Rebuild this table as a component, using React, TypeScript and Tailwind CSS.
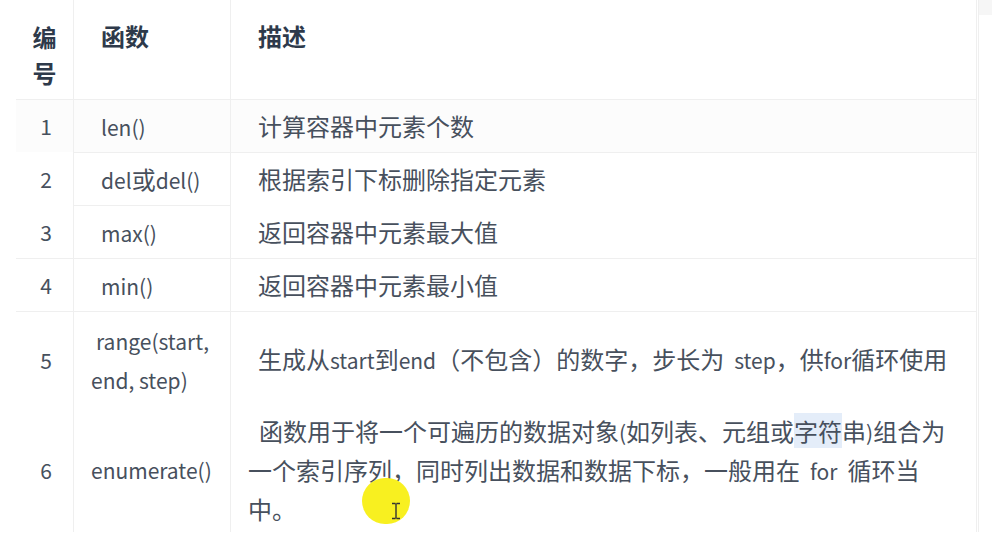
import React from "react";

const font = { fontFamily: '"Noto Sans CJK SC", "Noto Sans", sans-serif' };

function T({ s }: { s: string }) {
  const parts = s.split(/( |[\x21-\x7F]+)/).filter((p) => p !== "");
  return (
    <>
      {parts.map((p, i) =>
        p === " " ? (
          <span key={i} className="inline-block w-[10px]" />
        ) : /^[\x00-\x7F]+$/.test(p) ? (
          <span key={i} className="text-[21px]">
            {p}
          </span>
        ) : (
          <span key={i}>{p}</span>
        )
      )}
    </>
  );
}

type Row = {
  n: string;
  fn: React.ReactNode;
  desc: React.ReactNode;
  h: string;
  top: string;
  bg?: string;
  fnPad: string;
  descPad: string;
};

export default function App() {
  const rows: Row[] = [
    {
      n: "1",
      fn: <T s="len()" />,
      desc: "计算容器中元素个数",
      h: "h-[53px]",
      top: "all",
      bg: "bg-[#fcfcfc]",
      fnPad: "pl-[27px]",
      descPad: "pl-[27px]",
    },
    {
      n: "2",
      fn: <T s="del或del()" />,
      desc: "根据索引下标删除指定元素",
      h: "h-[53px]",
      top: "noFirst",
      fnPad: "pl-[27px]",
      descPad: "pl-[27px]",
    },
    {
      n: "3",
      fn: <T s="max()" />,
      desc: "返回容器中元素最大值",
      h: "h-[53px]",
      top: "mid",
      fnPad: "pl-[27px]",
      descPad: "pl-[27px]",
    },
    {
      n: "4",
      fn: <T s="min()" />,
      desc: "返回容器中元素最小值",
      h: "h-[53px]",
      top: "all",
      fnPad: "pl-[27px]",
      descPad: "pl-[27px]",
    },
    {
      n: "5",
      fn: (
        <>
          <span className="pl-[5px] text-[21px]">range(start,</span>
          <br />
          <span className="text-[21px]">end, step)</span>
        </>
      ),
      desc: <T s="生成从start到end（不包含）的数字，步长为 step，供for循环使用" />,
      h: "h-[96px]",
      top: "all",
      fnPad: "pl-[17px]",
      descPad: "pl-[27px]",
    },
    {
      n: "6",
      fn: <T s="enumerate()" />,
      desc: (
        <>
          <span className="pl-[11px]">
            <T s="函数用于将一个可遍历的数据对象(如列表、元组或" />
            <span className="bg-[#e4edf9]">字符</span>
            <T s="串)组合为" />
          </span>
          <br />
          <T s="一个索引序列，同时列出数据和数据下标，一般用在 for 循环当" />
          <br />
          中。
        </>
      ),
      h: "h-[125px]",
      top: "none",
      fnPad: "pl-[17px]",
      descPad: "pl-[17px]",
    },
  ];

  const line = "border-[#efefef]";

  return (
    <div
      className="relative w-[995px] h-[546px] bg-white overflow-hidden text-[24px] text-[#47505d]"
      style={font}
    >
      <div className="flex pl-[16px]">
        <div className="grid grid-cols-[57px_157px_747px] w-[961px]">
          {/* header */}
          <div className="h-[99px] pt-[19px] leading-[36px] text-center font-bold text-[#2e3a4b]">
            编<br />号
          </div>
          <div className={`h-[99px] pt-[18px] leading-[36px] pl-[27px] font-bold text-[#2e3a4b] border-l ${line}`}>
            函数
          </div>
          <div className={`h-[99px] pt-[18px] leading-[36px] pl-[27px] font-bold text-[#2e3a4b] border-l border-r ${line}`}>
            描述
          </div>

          {rows.map((r) => {
            const t1 = r.top === "all" ? "border-t" : "";
            const t2 = r.top === "all" || r.top === "noFirst" || r.top === "mid" ? "border-t" : "";
            const t3 = r.top === "all" || r.top === "noFirst" ? "border-t" : "";
            return (
              <React.Fragment key={r.n}>
                <div className={`${r.h} ${t1} ${line} ${r.bg ?? ""} flex items-center justify-center pl-[3px] leading-[38px] text-[21px]`}>
                  {r.n}
                </div>
                <div className={`${r.h} ${t2} border-l ${line} ${r.bg ?? ""} flex items-center ${r.fnPad} leading-[38px]`}>
                  <div>{r.fn}</div>
                </div>
                <div className={`${r.h} ${t3} border-l border-r ${line} ${r.bg ?? ""} flex items-center ${r.descPad} leading-[38px] whitespace-nowrap`}>
                  <div>{r.desc}</div>
                </div>
              </React.Fragment>
            );
          })}
        </div>
        <div className={`w-[2px] h-[532px] border-r ${line}`} />
        <div className="w-[13px] h-[15px] bg-[#f6f6f6]" />
      </div>

      {/* cursor highlight */}
      <div className="absolute left-[362px] top-[478px] w-[48px] h-[46px] rounded-full bg-[#f8f020]" />
      <svg
        className="absolute left-[391px] top-[502px]"
        width="10"
        height="18"
        viewBox="0 0 10 18"
      >
        <path d="M1 1.5h3.5M5.5 1.5H9M5 1.5v15M1 16.5h3.5M5.5 16.5H9" stroke="#333" strokeWidth="1.4" fill="none" />
      </svg>
    </div>
  );
}
